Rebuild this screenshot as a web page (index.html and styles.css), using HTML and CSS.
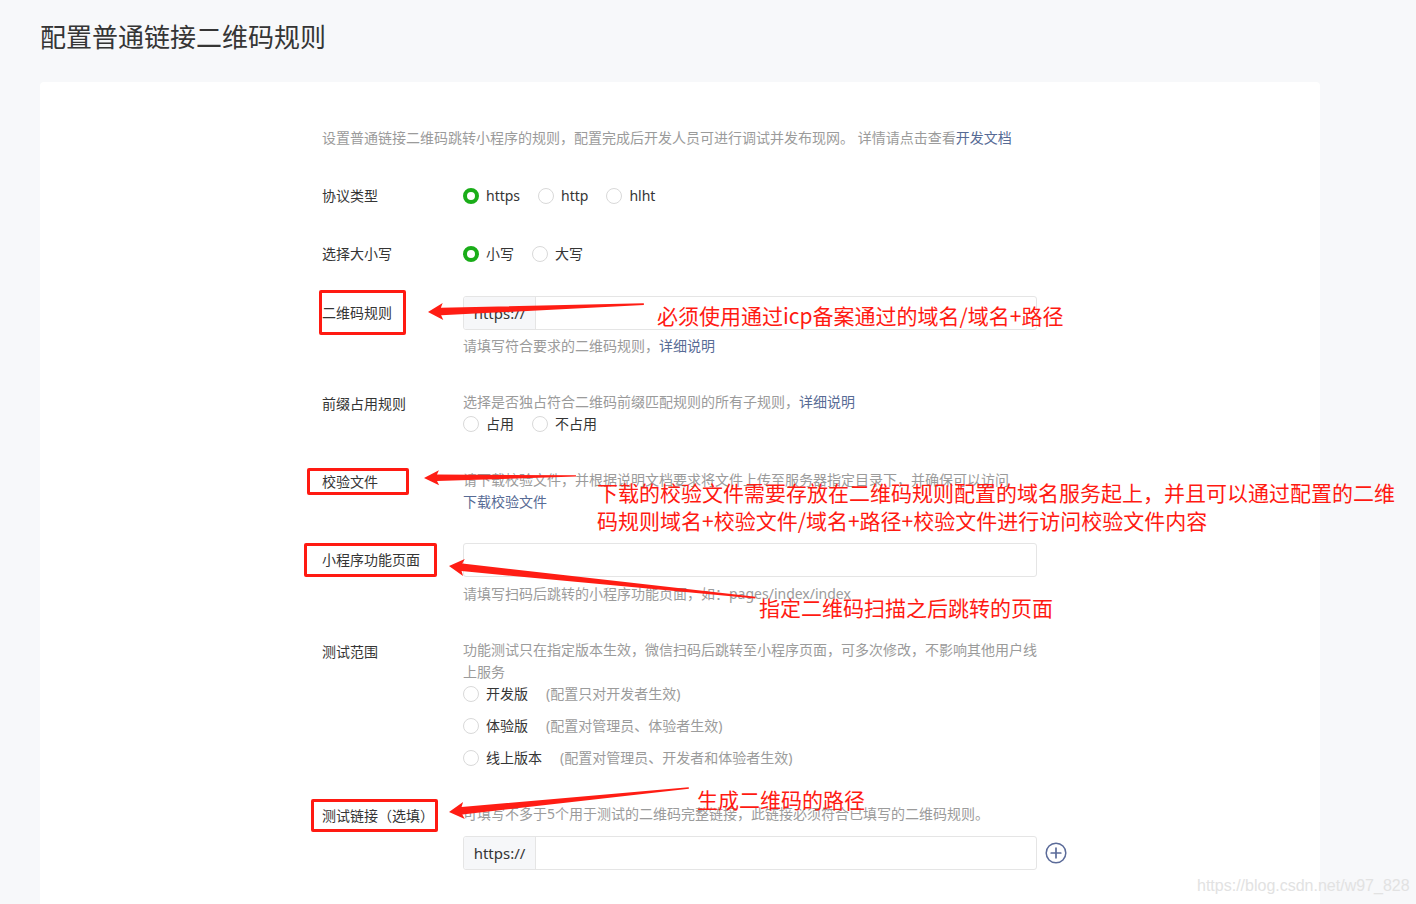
FILE: index.html
```html
<!DOCTYPE html>
<html lang="zh-CN">
<head>
<meta charset="utf-8">
<title>配置普通链接二维码规则</title>
<link rel="stylesheet" href="styles.css">
</head>
<body>
<div class="page">
  <h1 class="title">配置普通链接二维码规则</h1>
  <div class="card">
    <p class="desc">设置普通链接二维码跳转小程序的规则，配置完成后开发人员可进行调试并发布现网。 详情请点击查看<a class="link">开发文档</a></p>

    <div class="row row-a">
      <div class="label">协议类型</div>
      <div class="ctrl">
        <div class="radios">
          <label class="radio"><span class="dot on"></span><span>https</span></label>
          <label class="radio"><span class="dot"></span><span>http</span></label>
          <label class="radio"><span class="dot"></span><span>hlht</span></label>
        </div>
      </div>
    </div>

    <div class="row row-a">
      <div class="label">选择大小写</div>
      <div class="ctrl">
        <div class="radios">
          <label class="radio"><span class="dot on"></span><span>小写</span></label>
          <label class="radio"><span class="dot"></span><span>大写</span></label>
        </div>
      </div>
    </div>

    <div class="row row-rule">
      <div class="label label-input">二维码规则</div>
      <div class="ctrl">
        <div class="input"><span class="prefix">https://</span><span class="field"></span></div>
        <p class="help help-after-input">请填写符合要求的二维码规则，<a class="link">详细说明</a></p>
      </div>
    </div>

    <div class="row row-b">
      <div class="label label-pad">前缀占用规则</div>
      <div class="ctrl">
        <p class="help">选择是否独占符合二维码前缀匹配规则的所有子规则，<a class="link">详细说明</a></p>
        <div class="radios radios-sub">
          <label class="radio"><span class="dot"></span><span>占用</span></label>
          <label class="radio"><span class="dot"></span><span>不占用</span></label>
        </div>
      </div>
    </div>

    <div class="row row-b">
      <div class="label label-pad">校验文件</div>
      <div class="ctrl">
        <p class="help">请下载校验文件，并根据说明文档要求将文件上传至服务器指定目录下，并确保可以访问</p>
        <p class="help help-sub"><a class="link">下载校验文件</a></p>
      </div>
    </div>

    <div class="row row-page">
      <div class="label label-input">小程序功能页面</div>
      <div class="ctrl">
        <div class="input"><span class="field"></span></div>
        <p class="help help-after-input2">请填写扫码后跳转的小程序功能页面，如：pages/index/index</p>
      </div>
    </div>

    <div class="row row-range">
      <div class="label label-pad2">测试范围</div>
      <div class="ctrl">
        <p class="help help-wrap">功能测试只在指定版本生效，微信扫码后跳转至小程序页面，可多次修改，不影响其他用户线上服务</p>
        <div class="vlist">
          <label class="radio"><span class="dot"></span><span>开发版</span><span class="note">(配置只对开发者生效)</span></label>
          <label class="radio"><span class="dot"></span><span>体验版</span><span class="note">(配置对管理员、体验者生效)</span></label>
          <label class="radio"><span class="dot"></span><span>线上版本</span><span class="note">(配置对管理员、开发者和体验者生效)</span></label>
        </div>
      </div>
    </div>

    <div class="row row-b">
      <div class="label label-pad">测试链接（选填）</div>
      <div class="ctrl">
        <p class="help">可填写不多于5个用于测试的二维码完整链接，此链接必须符合已填写的二维码规则。</p>
        <div class="input-line">
          <div class="input"><span class="prefix">https://</span><span class="field"></span></div>
          <svg class="add" width="22" height="22" viewBox="0 0 22 22">
            <circle cx="11" cy="11" r="9.8" fill="none" stroke="#5b6b99" stroke-width="1.5"/>
            <path d="M11 6.2v9.6M6.2 11h9.6" stroke="#5b6b99" stroke-width="1.7" stroke-linecap="round"/>
          </svg>
        </div>
      </div>
    </div>
  </div>

  <div class="marks">
    <div class="box box1"></div>
    <div class="box box2"></div>
    <div class="box box3"></div>
    <div class="box box4"></div>
    <svg class="arrows" width="1416" height="904" viewBox="0 0 1416 904">
      <g fill="#ff1d14">
        <polygon transform="translate(428 312) rotate(-2.1)" points="0,0 15,-8.5 13,-3.8 216,-0.8 216,0.8 13,3.8 15,8.5"/>
        <polygon transform="translate(424 478) rotate(-0.8)" points="0,0 15,-7.5 13,-3.2 152,-0.7 152,0.7 13,3.2 15,7.5"/>
        <polygon transform="translate(449 566) rotate(5.9)" points="0,0 15,-8.5 13,-3.8 308,-0.8 308,0.8 13,3.8 15,8.5"/>
        <polygon transform="translate(449 812) rotate(-5.7)" points="0,0 15,-8.5 13,-3.8 241,-0.8 241,0.8 13,3.8 15,8.5"/>
      </g>
    </svg>
    <div class="note-red n1">必须使用通过icp备案通过的域名/域名+路径</div>
    <div class="note-red n2"><span class="ln">下载的校验文件需要存放在二维码规则配置的域名服务起上，并且可以通过配置的二维</span><span class="ln">码规则域名+校验文件/域名+路径+校验文件进行访问校验文件内容</span></div>
    <div class="note-red n3">指定二维码扫描之后跳转的页面</div>
    <div class="note-red n4">生成二维码的路径</div>
    <div class="watermark">https://blog.csdn.net/w97_828</div>
  </div>
</div>
</body>
</html>
```

FILE: styles.css
```css
* { box-sizing: border-box; }
html, body {
  margin: 0;
  padding: 0;
  background: #f7f8fa;
  overflow: hidden;
}
body {
  font-family: "Noto Sans", "Noto Sans CJK SC", sans-serif;
  font-size: 14px;
  color: #353535;
}
.page {
  position: relative;
  width: 1416px;
  height: 904px;
}
.title {
  margin: 0;
  padding: 19px 0 0 40px;
  font-size: 26px;
  line-height: 36px;
  font-weight: 400;
  color: #353535;
}
.card {
  margin: 27px 0 0 40px;
  width: 1280px;
  height: 860px;
  background: #fff;
  border-radius: 4px;
  padding: 46px 0 0 282px;
}
.desc {
  margin: 0;
  line-height: 20px;
  color: #9b9b9b;
}
.link { color: #576b95; text-decoration: none; }

.row { display: flex; }
.row-a { margin-top: 38px; }
.row-rule { margin-top: 32px; }
.row-b { margin-top: 36px; }
.row-page { margin-top: 31px; }
.row-range { margin-top: 35px; }

.label {
  width: 141px;
  flex: none;
  line-height: 20px;
  color: #353535;
}
.label-input { line-height: 34px; }
.label-pad { padding-top: 2px; }
.label-pad2 { padding-top: 2px; line-height: 22px; }

.ctrl { width: 574px; flex: none; }

.radios { display: flex; gap: 18px; height: 20px; align-items: center; }
.radios-sub { margin-top: 2px; }
.radio {
  display: flex;
  align-items: center;
  gap: 7px;
  line-height: 20px;
  color: #353535;
}
.dot {
  width: 16px;
  height: 16px;
  border-radius: 50%;
  border: 1px solid #d9d9d9;
  background: #fff;
  flex: none;
}
.dot.on { border: 4.5px solid #1aad19; }

.help {
  margin: 0;
  line-height: 20px;
  color: #9b9b9b;
}
.help-after-input { margin-top: 6px; }
.help-after-input2 { margin-top: 7px; }
.help-sub { margin-top: 2px; }
.help-wrap { line-height: 22px; }

.input {
  display: flex;
  flex: none;
  width: 574px;
  height: 34px;
  border: 1px solid #e5e5e5;
  border-radius: 3px;
  background: #fff;
  overflow: hidden;
}
.prefix {
  width: 72px;
  flex: none;
  background: #f6f7f9;
  border-right: 1px solid #e5e5e5;
  line-height: 32px;
  text-align: center;
  color: #353535;
  font-size: 15px;
}
.field { flex: 1; }

.vlist {
  margin-top: 1px;
  display: flex;
  flex-direction: column;
  gap: 12px;
}
.note { margin-left: 11px; color: #9b9b9b; }

.input-line {
  margin-top: 12px;
  display: flex;
  align-items: center;
  width: 620px;
}
.add { margin-left: 8px; flex: none; }

/* annotation overlay */
.marks {
  position: absolute;
  left: 0;
  top: 0;
  width: 1416px;
  height: 904px;
  pointer-events: none;
}
.arrows { position: absolute; left: 0; top: 0; }
.box {
  position: absolute;
  border: 3px solid #ff1a12;
  border-radius: 2px;
}
.box1 { left: 319px; top: 290px; width: 87px; height: 45px; }
.box2 { left: 307px; top: 468px; width: 102px; height: 27px; }
.box3 { left: 304px; top: 543px; width: 133px; height: 34px; }
.box4 { left: 311px; top: 799px; width: 127px; height: 33px; }

.note-red {
  position: absolute;
  font-family: "Noto Sans CJK SC", sans-serif;
  font-size: 21px;
  line-height: 28px;
  color: #ff1a12;
  white-space: nowrap;
}
.note-red .ln { display: block; }
.n1 { left: 657px; top: 301px; }
.n2 { left: 597px; top: 478px; }
.n3 { left: 759px; top: 593px; }
.n4 { left: 697px; top: 785px; }

.watermark {
  position: absolute;
  left: 1197px;
  top: 876px;
  font-family: "Liberation Sans", sans-serif;
  font-size: 16px;
  line-height: 20px;
  color: #e2e2e2;
}
```
